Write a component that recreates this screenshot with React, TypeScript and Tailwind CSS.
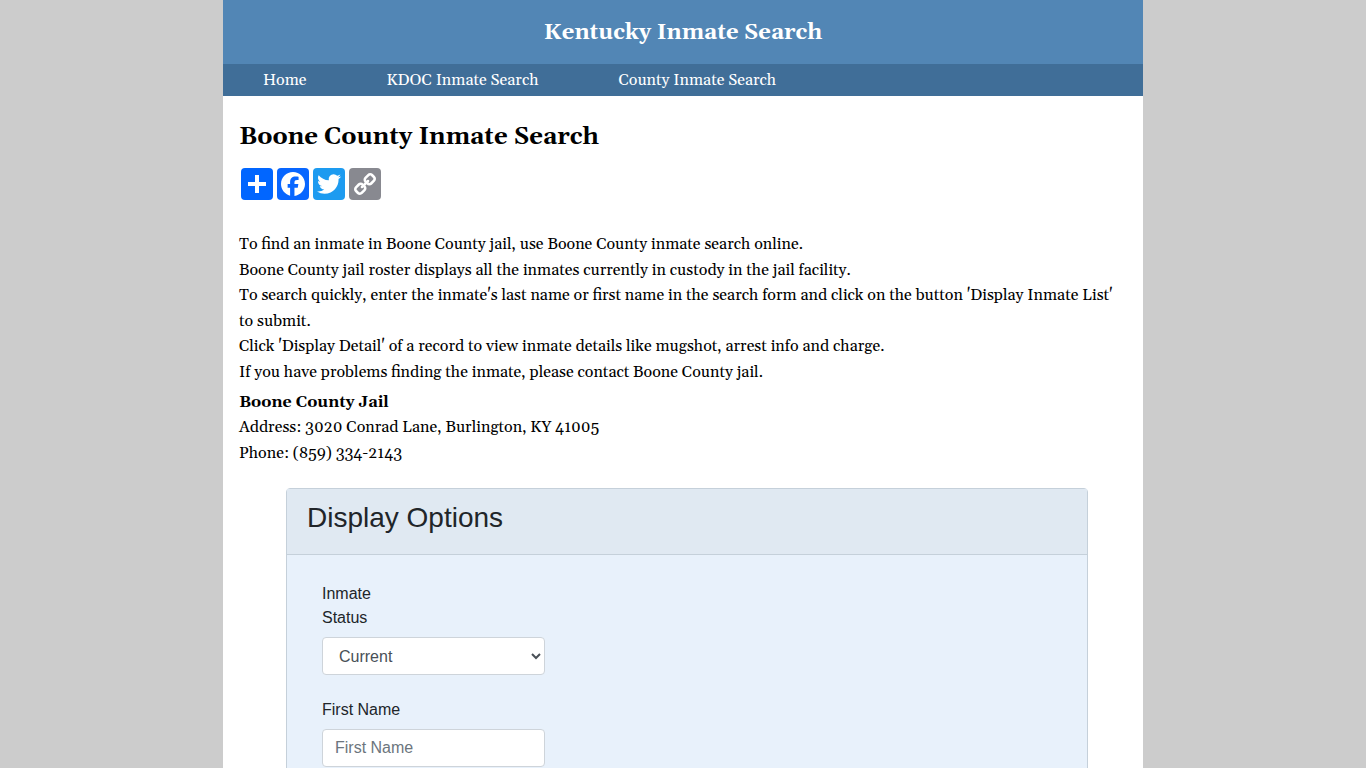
import { useState } from 'react';

const navigation = [
  { name: 'Home', href: '#home' },
  { name: 'KDOC Inmate Search', href: '#kdoc' },
  { name: 'County Inmate Search', href: '#county' },
];

const shareLinks = [
  {
    name: 'Share',
    color: 'bg-[#0166ff]',
    path: 'M14 7h4v7h7v4h-7v7h-4v-7H7v-4h7z',
  },
  {
    name: 'Facebook',
    color: 'bg-[#0866ff]',
    path: 'M28 16c0-6.627-5.373-12-12-12S4 9.373 4 16c0 5.628 3.875 10.35 9.101 11.647v-7.98h-2.474V16H13.1v-1.58c0-4.085 1.849-5.978 5.859-5.978.76 0 2.072.15 2.608.298v3.325c-.283-.03-.775-.045-1.386-.045-1.967 0-2.728.745-2.728 2.683V16h3.92l-.673 3.667h-3.247v8.245C23.395 27.195 28 22.135 28 16',
  },
  {
    name: 'Twitter',
    color: 'bg-[#1d9bf0]',
    path: 'M28 8.557a10 10 0 0 1-2.828.775 4.93 4.93 0 0 0 2.166-2.725 9.7 9.7 0 0 1-3.13 1.194 4.92 4.92 0 0 0-3.593-1.55 4.924 4.924 0 0 0-4.794 6.049c-4.09-.21-7.72-2.17-10.15-5.15a4.94 4.94 0 0 0-.665 2.477c0 1.71.87 3.214 2.19 4.1a5 5 0 0 1-2.23-.616v.06c0 2.39 1.7 4.38 3.952 4.83-.414.115-.85.174-1.297.174q-.476-.001-.928-.086a4.935 4.935 0 0 0 4.6 3.42 9.9 9.9 0 0 1-6.114 2.107q-.597 0-1.175-.068a13.95 13.95 0 0 0 7.55 2.213c9.056 0 14.01-7.507 14.01-14.013q0-.32-.015-.637c.96-.695 1.795-1.56 2.455-2.55z',
  },
  {
    name: 'Copy Link',
    color: 'bg-[#888990]',
    path: 'M7.591 21.177c0-.36.126-.665.377-.917l2.804-2.804a1.235 1.235 0 0 1 .913-.378c.377 0 .7.144.97.43-.026.028-.11.11-.255.25-.144.14-.24.236-.29.29a2.8 2.8 0 0 0-.2.256 1.1 1.1 0 0 0-.177.344 1.4 1.4 0 0 0-.046.37q.001.54.377.917a1.25 1.25 0 0 0 .918.377c.126.001.25-.015.37-.047.13-.035.244-.1.345-.175q.135-.094.256-.2.15-.14.29-.29c.14-.14.223-.23.25-.254.297.28.445.607.445.984 0 .36-.126.664-.377.916l-2.778 2.79a1.24 1.24 0 0 1-.917.364c-.36 0-.665-.118-.917-.35l-1.982-1.97a1.22 1.22 0 0 1-.378-.9zm9.477-9.504c0-.36.126-.665.377-.917l2.777-2.79a1.24 1.24 0 0 1 .913-.378c.35 0 .656.12.917.364l1.984 1.968c.254.252.38.553.38.903 0 .36-.126.665-.38.917l-2.802 2.804a1.24 1.24 0 0 1-.916.364c-.377 0-.7-.14-.97-.418.026-.027.11-.11.255-.25a8 8 0 0 0 .29-.29c.072-.08.139-.166.2-.255q.12-.16.176-.344.048-.18.047-.37c0-.36-.126-.662-.377-.914a1.25 1.25 0 0 0-.917-.377q-.203 0-.37.046-.17.052-.346.175a2.5 2.5 0 0 0-.256.2q-.15.14-.29.29c-.14.14-.223.228-.25.254-.297-.28-.445-.6-.445-.97zM5.003 21.177c0 1.078.382 1.99 1.146 2.736l1.982 1.968c.745.75 1.658 1.12 2.736 1.12 1.087 0 2.004-.38 2.75-1.143l2.777-2.79c.75-.747 1.12-1.66 1.12-2.737 0-1.106-.392-2.046-1.183-2.818l1.186-1.185c.774.79 1.708 1.186 2.805 1.186 1.078 0 1.995-.376 2.75-1.13l2.803-2.81c.751-.754 1.128-1.671 1.128-2.748 0-1.08-.382-1.993-1.146-2.738L23.875 6.12C23.13 5.372 22.218 5 21.139 5c-1.087 0-2.004.382-2.75 1.146l-2.777 2.79c-.75.747-1.12 1.66-1.12 2.737 0 1.105.392 2.045 1.183 2.817l-1.186 1.186c-.774-.79-1.708-1.186-2.805-1.186-1.078 0-1.995.377-2.75 1.132L6.13 18.426c-.754.755-1.13 1.672-1.13 2.75z',
  },
];

const instructions = [
  'To find an inmate in Boone County jail, use Boone County inmate search online.',
  'Boone County jail roster displays all the inmates currently in custody in the jail facility.',
  "To search quickly, enter the inmate's last name or first name in the search form and click on the button 'Display Inmate List' to submit.",
  "Click 'Display Detail' of a record to view inmate details like mugshot, arrest info and charge.",
  'If you have problems finding the inmate, please contact Boone County jail.',
];

function Header() {
  return (
    <header className="text-white">
      <div className="flex h-16 items-center justify-center bg-[#5286b5] pt-0.5">
        <p className="text-[22px] leading-8 font-bold">Kentucky Inmate Search</p>
      </div>
      <nav className="flex h-8 items-center gap-20 bg-[#406e98] px-10">
        {navigation.map((item) => (
          <a key={item.name} href={item.href} className="text-base leading-8 hover:underline">
            {item.name}
          </a>
        ))}
      </nav>
    </header>
  );
}

function ShareButtons() {
  return (
    <div className="flex gap-1 px-0.5">
      {shareLinks.map((link) => (
        <a key={link.name} href="#share" aria-label={link.name} className={`size-8 rounded ${link.color}`}>
          <svg viewBox="0 0 32 32" className="size-8" fill="#fff" aria-hidden="true">
            <path d={link.path} />
          </svg>
        </a>
      ))}
    </div>
  );
}

function DisplayOptions() {
  const [status, setStatus] = useState('current');
  const [firstName, setFirstName] = useState('');

  return (
    <form className="mt-[22px] mr-[39px] ml-[47px] rounded border border-[#c5d0da] bg-[#e8f1fb] font-['Liberation_Sans',Arial,sans-serif] text-base text-[#212529]">
      <div className="border-b border-[#c5d0da] bg-[#e0e9f2] px-5 pt-3 pb-5">
        <h2 className="text-[28px] leading-[33px]">Display Options</h2>
      </div>
      <div className="flex flex-col gap-[23px] px-[35px] pt-[27px] pb-10">
        <div>
          <label htmlFor="status" className="mb-[7px] block w-16">
            Inmate Status
          </label>
          <select
            id="status"
            value={status}
            onChange={(e) => setStatus(e.target.value)}
            className="block h-[38px] w-[223px] rounded border border-[#ced4da] bg-white px-3 text-[#495057]"
          >
            <option value="current">Current</option>
            <option value="released">Released</option>
          </select>
        </div>
        <div>
          <label htmlFor="first-name" className="mb-[7px] block">
            First Name
          </label>
          <input
            id="first-name"
            type="text"
            placeholder="First Name"
            value={firstName}
            onChange={(e) => setFirstName(e.target.value)}
            className="block h-[38px] w-[223px] rounded border border-[#ced4da] bg-white px-3 text-[#495057] placeholder:text-[#6c757d]"
          />
        </div>
      </div>
    </form>
  );
}

export default function App() {
  return (
    <div className="min-h-screen bg-[#cccccc] font-[Georgia,Gelasio,'Liberation_Serif',serif] text-black">
      <div className="mx-auto min-h-screen max-w-[920px] bg-white">
        <Header />
        <main className="px-4 pt-[25px] pb-10">
          <h1 className="mb-[15px] text-2xl font-bold">Boone County Inmate Search</h1>
          <ShareButtons />
          <div className="mt-8 text-base leading-[1.6]">
            {instructions.map((line) => (
              <p key={line}>{line}</p>
            ))}
          </div>
          <address className="mt-1 text-base leading-[1.6] not-italic">
            <strong className="block">Boone County Jail</strong>
            <p>Address: 3020 Conrad Lane, Burlington, KY 41005</p>
            <p>Phone: (859) 334-2143</p>
          </address>
          <DisplayOptions />
        </main>
      </div>
    </div>
  );
}
